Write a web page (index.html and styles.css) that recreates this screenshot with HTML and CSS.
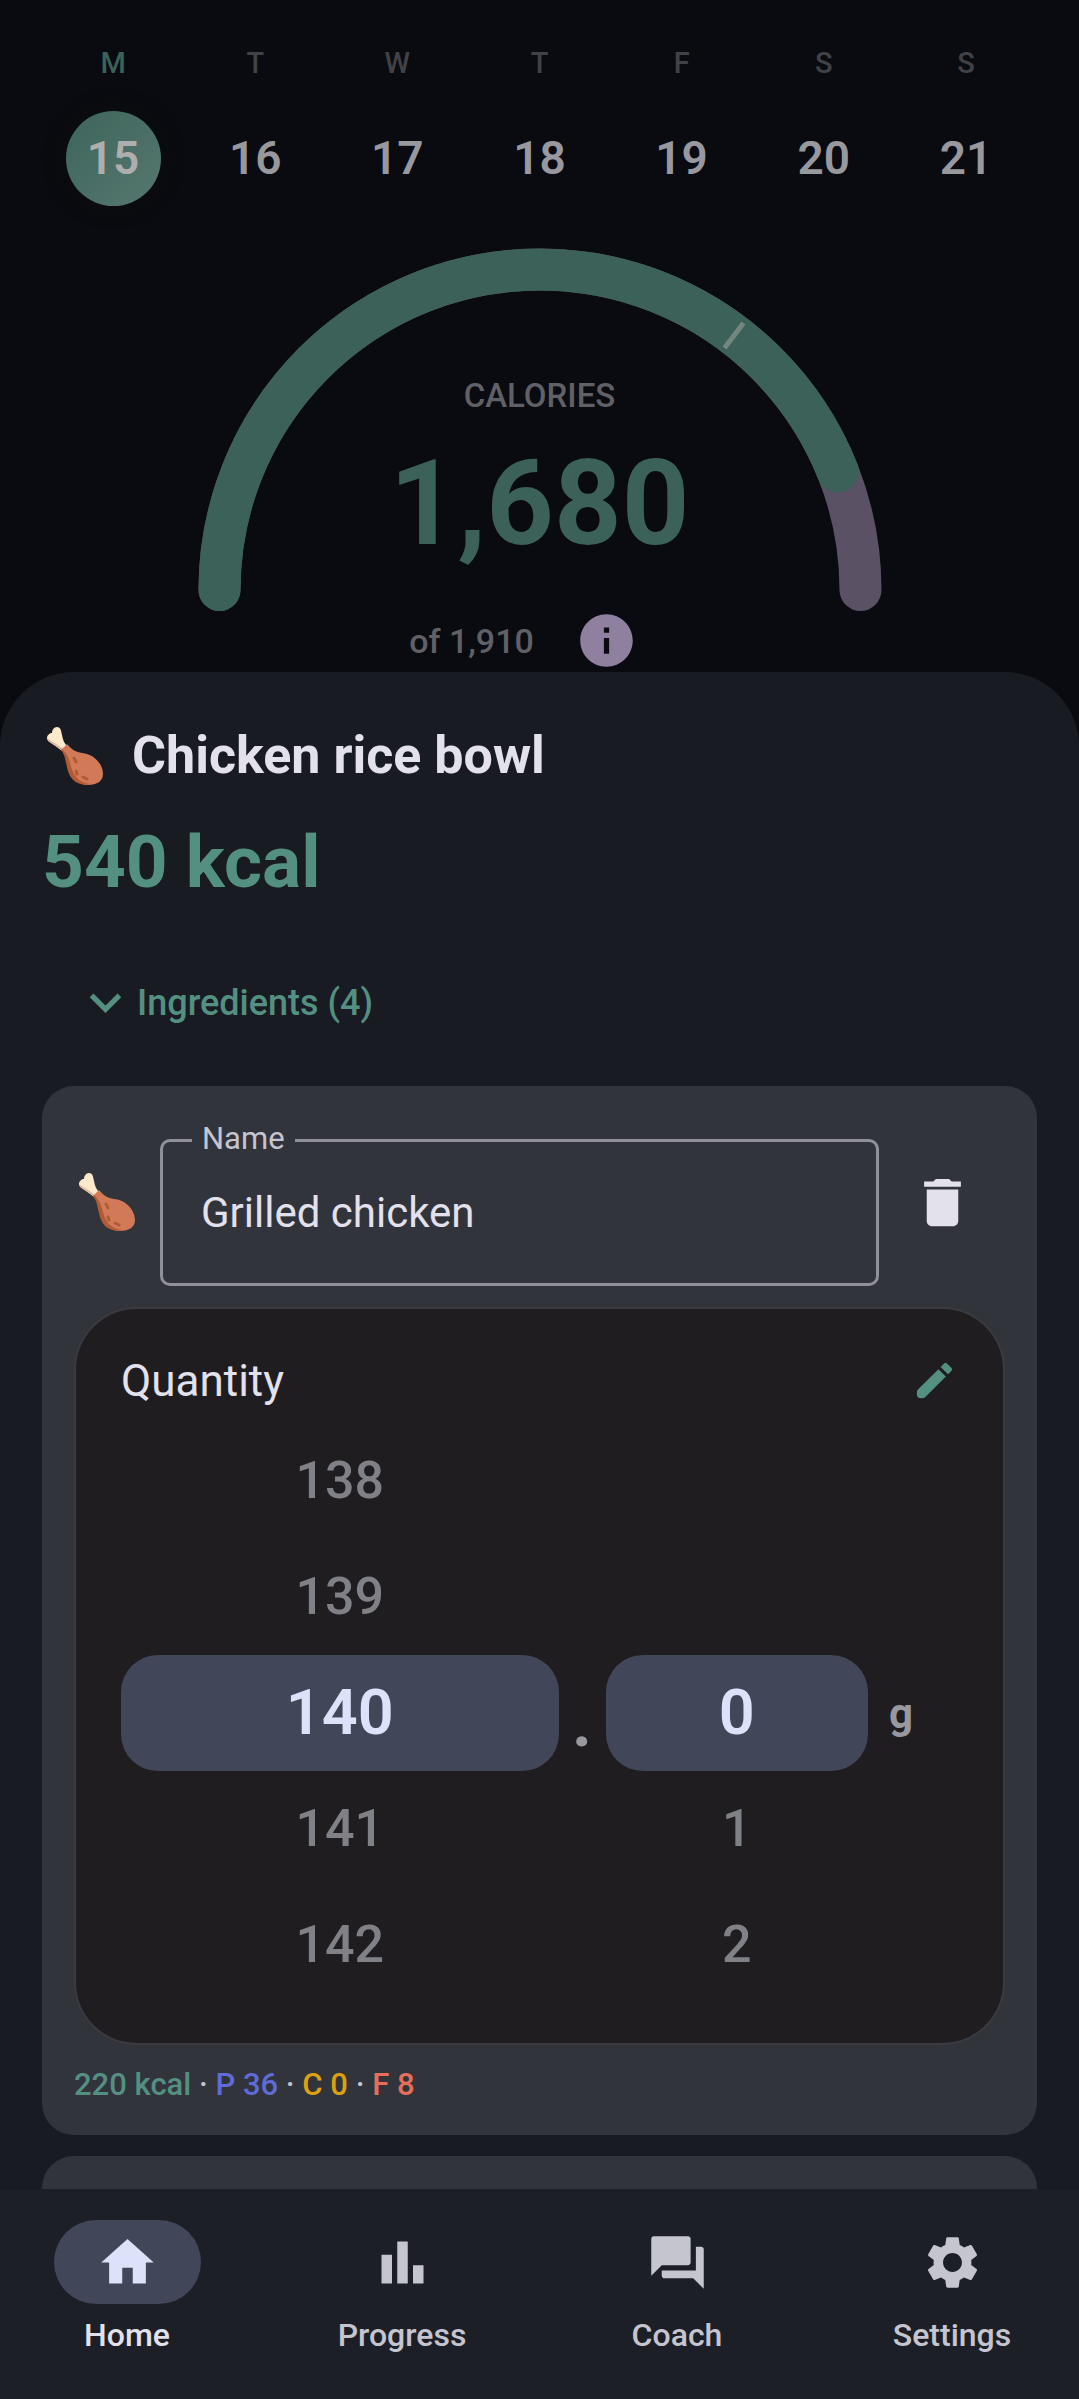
FILE: index.html
```html
<!DOCTYPE html>
<html lang="en">
<head>
<meta charset="utf-8">
<meta name="viewport" content="width=device-width, initial-scale=1">
<title>Chicken rice bowl</title>
<link rel="stylesheet" href="styles.css">
</head>
<body>
<svg width="0" height="0" class="defs" aria-hidden="true">
  <symbol id="drumstick" viewBox="0 0 66 66">
    <path fill="#ffe9cc" d="M5 15c0-3 3-5 5-5 0-3 2-6 5-6 4 0 4 4 5 8 1 5 2 8 5 11l-5 5c-3-3-7-5-11-8-2-1-4-3-4-5z"/>
    <path fill="#e0b9a0" d="M5 15c0 2 2 4 4 5 4 3 8 5 11 8l1-2c-3-3-7-5-10-7-3-2-5-3-6-4z"/>
    <path fill="#d27a57" d="M19 27l6-6c5 6 9 8 15 9 12 1 21 11 21 21 0 7-6 11-15 11-10 0-16-7-19-17-2-8-3-13-8-18z"/>
    <path fill="#b25b33" d="M19 27l1-1c5 5 7 9 9 17 3 11 8 17 20 18-14 3-22-5-24-17-2-8-2-12-6-17z"/>
    <g stroke="#b25b33" stroke-width="3" stroke-linecap="round"><path d="M32 35l2 4M34 48l1 3M41 54l4 2"/></g>
  </symbol>
</svg>
<div class="app">
  <main class="screen">
    <section class="hero">
      <ol class="week">
        <li class="day day--on"><span class="day__name">M</span><span class="day__num">15</span></li>
        <li class="day"><span class="day__name">T</span><span class="day__num">16</span></li>
        <li class="day"><span class="day__name">W</span><span class="day__num">17</span></li>
        <li class="day"><span class="day__name">T</span><span class="day__num">18</span></li>
        <li class="day"><span class="day__name">F</span><span class="day__num">19</span></li>
        <li class="day"><span class="day__name">S</span><span class="day__num">20</span></li>
        <li class="day"><span class="day__name">S</span><span class="day__num">21</span></li>
      </ol>
      <div class="gauge">
        <svg class="gauge__arc" viewBox="0 0 684 364" aria-hidden="true">
          <g fill="none" stroke-width="42" stroke-linecap="round">
            <path stroke="#5a5264" d="M21.5 342a320.5 320.5 0 0 1 641 0"/>
            <path stroke="#3b6158" d="M21.5 342A320.5 320.5 0 0 1 639.8 223.5"/>
          </g>
          <path stroke="#72877f" stroke-width="5" d="M526.5 100 545.5 75"/>
        </svg>
        <div class="gauge__text">
          <span class="gauge__label">CALORIES</span>
          <strong class="gauge__value">1,680</strong>
          <div class="gauge__goal">
            <span>of 1,910</span>
            <button class="info" type="button" aria-label="About this goal">
              <svg class="icon" viewBox="0 0 24 24"><path d="M12 2C6.480 2 2 6.480 2 12s4.480 10 10 10 10-4.480 10-10S17.520 2 12 2zm1 15h-2v-6h2v6zm0-8h-2V7h2v2z"/></svg>
            </button>
          </div>
        </div>
      </div>
    </section>

    <section class="sheet">
      <header class="meal">
        <svg class="food" aria-hidden="true"><use href="#drumstick"/></svg>
        <h1 class="meal__name">Chicken rice bowl</h1>
      </header>
      <p class="meal__kcal">540 kcal</p>
      <button class="toggle" type="button" aria-expanded="true">
        <svg class="icon" viewBox="0 0 24 24" aria-hidden="true"><path d="M16.590 8.590 12 13.170 7.410 8.590 6 10l6 6 6-6z"/></svg>
        Ingredients (4)
      </button>

      <div class="cards">
        <article class="card">
          <div class="card__head">
            <svg class="food" aria-hidden="true"><use href="#drumstick"/></svg>
            <div class="field">
              <label class="field__label" for="name">Name</label>
              <input class="field__input" id="name" type="text" value="Grilled chicken">
            </div>
            <button class="delete" type="button" aria-label="Delete ingredient">
              <svg class="icon" viewBox="0 0 24 24"><path d="M6 19c0 1.100.9 2 2 2h8c1.100 0 2-.9 2-2V7H6v12zM19 4h-3.500l-1-1h-5l-1 1H5v2h14V4z"/></svg>
            </button>
          </div>

          <div class="quantity">
            <div class="quantity__head">
              <h2 class="quantity__title">Quantity</h2>
              <button class="edit" type="button" aria-label="Edit quantity">
                <svg class="icon icon--small" viewBox="0 0 24 24"><path d="M14 6.200 3.800 16.400Q3 17.200 3 18v1q0 2 2 2h1q.8 0 1.600-.8L17.800 10zM20.710 7.040c.39-.39.39-1.020 0-1.410l-2.340-2.340c-.39-.39-1.020-.39-1.410 0l-1.830 1.830 3.750 3.750 1.830-1.830z"/></svg>
              </button>
            </div>
            <div class="picker">
              <ul class="wheel">
                <li>138</li>
                <li>139</li>
                <li class="wheel__on">140</li>
                <li>141</li>
                <li>142</li>
              </ul>
              <span class="picker__point">.</span>
              <ul class="wheel">
                <li></li>
                <li></li>
                <li class="wheel__on">0</li>
                <li>1</li>
                <li>2</li>
              </ul>
              <span class="picker__unit">g</span>
            </div>
          </div>

          <p class="macros"><span class="kcal">220 kcal</span> · <span class="protein">P 36</span> · <span class="carbs">C 0</span> · <span class="fat">F 8</span></p>
        </article>
        <article class="card card--next"></article>
      </div>
    </section>
  </main>

  <nav class="nav">
    <a class="nav__item nav__item--on" href="#home">
      <span class="nav__icon"><svg class="icon" viewBox="0 0 24 24"><path d="M10 20v-6h4v6h5v-8h3L12 3 2 12h3v8z"/></svg></span>
      Home
    </a>
    <a class="nav__item" href="#progress">
      <span class="nav__icon"><svg class="icon" viewBox="0 0 24 24"><path d="M4 9h4v11H4zM10 4h4v16h-4zM16 13h4v7h-4z"/></svg></span>
      Progress
    </a>
    <a class="nav__item" href="#coach">
      <span class="nav__icon"><svg class="icon" viewBox="0 0 24 24"><path d="M21 6h-2v9H6v2c0 .55.45 1 1 1h11l4 4V7c0-.55-.45-1-1-1zm-4 6V3c0-.55-.45-1-1-1H3c-.55 0-1 .45-1 1v14l4-4h10c.55 0 1-.45 1-1z"/></svg></span>
      Coach
    </a>
    <a class="nav__item" href="#settings">
      <span class="nav__icon"><svg class="icon" viewBox="0 0 24 24"><path d="M19.140 12.940c.04-.3.06-.61.06-.94 0-.32-.02-.64-.07-.94l2.030-1.580c.18-.14.23-.41.12-.61l-1.920-3.320c-.12-.22-.37-.29-.59-.22l-2.390.96c-.5-.38-1.030-.7-1.620-.94l-.36-2.540c-.04-.24-.24-.41-.48-.41h-3.840c-.24 0-.43.17-.47.41l-.36 2.540c-.59.24-1.130.57-1.620.94l-2.390-.96c-.22-.08-.47 0-.59.22L2.740 8.870c-.12.21-.08.47.12.61l2.030 1.580c-.05.3-.09.63-.09.94s.02.64.07.94l-2.030 1.580c-.18.14-.23.41-.12.61l1.920 3.320c.12.22.37.29.59.22l2.390-.96c.5.38 1.030.7 1.620.94l.36 2.540c.05.24.24.41.48.41h3.840c.24 0 .44-.17.47-.41l.36-2.540c.59-.24 1.130-.56 1.620-.94l2.390.96c.22.08.47 0 .59-.22l1.920-3.320c.12-.22.07-.47-.12-.61l-2.010-1.580zM12 15.600c-1.980 0-3.600-1.620-3.600-3.600s1.620-3.600 3.600-3.600 3.600 1.620 3.600 3.600-1.620 3.600-3.600 3.600z"/></svg></span>
      Settings
    </a>
  </nav>
</div>
</body>
</html>
```
FILE: styles.css
```css
:root {
  --bg: #0a0b10;
  --sheet: #191b23;
  --nav: #1d1f27;
  --card: #32343c;
  --panel: #201d21;
  --accent: #549082;
  --selected: #414659;
  --on-selected: #dde1f9;
  --text: #e2e1ec;
  --muted: #c5c5d0;
}

* { box-sizing: border-box; }

body {
  margin: 0;
  background: var(--bg);
  color: var(--text);
  font-family: Roboto, "Noto Sans", sans-serif;
}

h1, h2, p, ol, ul { margin: 0; padding: 0; list-style: none; }

button {
  border: 0;
  padding: 0;
  background: none;
  color: inherit;
  font: inherit;
  cursor: pointer;
}

.defs { position: absolute; }
.icon { display: block; width: 63px; height: 63px; fill: currentColor; }
.icon--small { width: 47px; height: 47px; }
.food { flex: none; width: 66px; height: 66px; }

.app { display: flex; flex-direction: column; height: 100vh; }
.screen { flex: 1; min-height: 0; overflow: hidden auto; scrollbar-width: none; }

/* Week strip and calorie gauge */
.hero { padding: 42px 42px 0; }
.week { display: grid; grid-template-columns: repeat(7, 1fr); }
.day { display: flex; flex-direction: column; align-items: center; gap: 27px; }
.day__name { color: #414248; font-size: 29px; font-weight: 500; line-height: 42px; }
.day__num {
  width: 95px;
  border-radius: 50%;
  color: #98989f;
  font-size: 46px;
  font-weight: 600;
  line-height: 95px;
  text-align: center;
}
.day--on .day__name { color: #3b6158; }
.day--on .day__num {
  background: linear-gradient(135deg, #3d655b, #56776f);
  box-shadow: 0 0 20px #0c0e12;
  color: #aeaeae;
}

.gauge { display: grid; justify-items: center; margin-top: 42px; }
.gauge > * { grid-area: 1 / 1; }
.gauge__arc { width: 684px; max-width: 100%; }
.gauge__text { display: flex; flex-direction: column; align-items: center; padding-top: 127px; }
.gauge__label { color: #606067; font-size: 33px; font-weight: 500; line-height: 42px; }
.gauge__value { margin-top: 28px; color: #3b6158; font-size: 118px; font-weight: 700; line-height: 118px; }
.gauge__goal {
  display: flex;
  align-items: center;
  gap: 10px;
  margin-top: 46px;
  color: #606067;
  font-size: 34px;
  font-weight: 500;
}
.info { display: flex; justify-content: center; width: 126px; color: #9080a0; }

/* Meal sheet */
.sheet { padding: 42px; border-radius: 74px 74px 0 0; background: var(--sheet); }
.meal { display: flex; align-items: center; gap: 24px; height: 84px; }
.meal__name { font-size: 52px; font-weight: 700; line-height: 68px; }
.meal__kcal { margin-top: 16px; color: var(--accent); font-size: 73px; font-weight: 700; line-height: 96px; }
.toggle {
  display: flex;
  align-items: center;
  height: 105px;
  margin: 40px 0 31px;
  padding: 0 32px;
  color: var(--accent);
  font-size: 36px;
  font-weight: 500;
}

.cards { display: grid; gap: 21px; }
.card { padding: 32px; border-radius: 32px; background: var(--card); }
.card--next { height: 420px; }
.card__head { display: flex; align-items: center; margin-bottom: 21px; }
.field { position: relative; flex: 1; margin-left: 20px; padding-top: 21px; }
.field__label {
  position: absolute;
  top: 0;
  left: 32px;
  padding: 0 10px;
  background: var(--card);
  color: var(--muted);
  font-size: 31px;
  line-height: 42px;
}
.field__input {
  display: block;
  width: 100%;
  height: 147px;
  padding: 0 38px;
  border: 3px solid #8f9099;
  border-radius: 10px;
  background: none;
  color: var(--text);
  font: 400 42px Roboto, "Noto Sans", sans-serif;
}
.delete { display: flex; justify-content: center; width: 126px; }

.quantity { padding: 40px 45px; border: 2px solid #3b3a3f; border-radius: 63px; background: var(--panel); }
.quantity__head { display: flex; align-items: center; justify-content: space-between; height: 63px; margin-bottom: 11px; }
.quantity__title { font-size: 44px; font-weight: 400; }
.edit { color: var(--accent); }
.picker { display: grid; grid-template-columns: 5fr 47px 3fr 90px; align-items: center; }
.wheel { color: #808087; font-size: 52px; font-weight: 500; line-height: 116px; text-align: center; }
.wheel li { height: 116px; }
.wheel .wheel__on { border-radius: 37px; background: var(--selected); color: var(--on-selected); font-size: 63px; font-weight: 600; }
.picker__point { padding-top: 16px; color: #98989f; font-size: 74px; font-weight: 600; line-height: 74px; text-align: center; }
.picker__unit { padding-left: 21px; color: #98989f; font-size: 42px; font-weight: 700; }

.macros { margin-top: 21px; color: var(--muted); font-size: 31px; font-weight: 500; line-height: 37px; }
.kcal { color: var(--accent); }
.protein { color: #5f6bd8; }
.carbs { color: #dca010; }
.fat { color: #e76f5a; }

/* Bottom navigation */
.nav { display: grid; grid-template-columns: repeat(4, 1fr); gap: 21px; height: 210px; padding-top: 31px; background: var(--nav); }
.nav__item {
  display: flex;
  flex-direction: column;
  align-items: center;
  gap: 10px;
  color: var(--muted);
  font-size: 32px;
  font-weight: 500;
  line-height: 42px;
  text-decoration: none;
}
.nav__icon { display: grid; place-items: center; width: 147px; height: 84px; border-radius: 42px; }
.nav__item--on { color: var(--text); }
.nav__item--on .nav__icon { background: var(--selected); color: var(--on-selected); }
```
